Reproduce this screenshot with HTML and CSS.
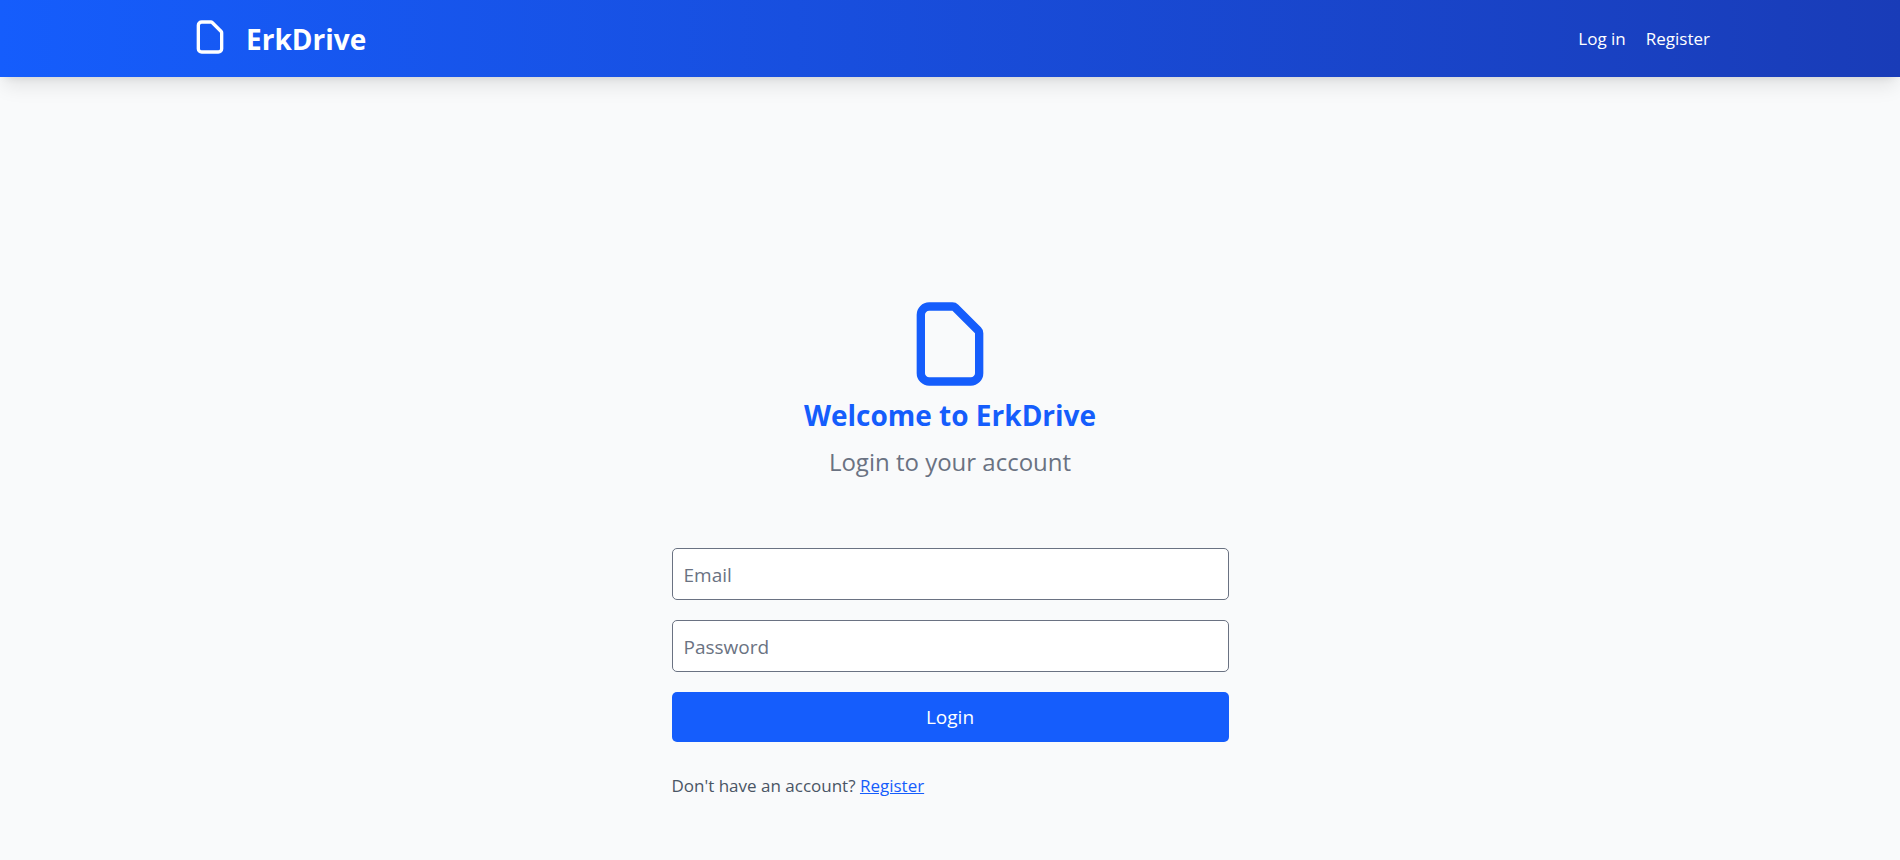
FILE: index.html
```html
<!DOCTYPE html>
<html lang="en">
<head>
<meta charset="utf-8">
<meta name="viewport" content="width=device-width, initial-scale=1">
<title>ErkDrive</title>
<link rel="stylesheet" href="styles.css">
</head>
<body>
<header class="header">
  <div class="container">
    <a class="brand" href="#">
      <svg class="brand-icon" viewBox="0 0 24 24" fill="none" stroke="currentColor" stroke-width="2" stroke-linecap="round" stroke-linejoin="round" aria-hidden="true"><path d="M7 21h10a2 2 0 002-2V9.414a1 1 0 00-.293-.707l-5.414-5.414A1 1 0 0012.586 3H7a2 2 0 00-2 2v14a2 2 0 002 2z"/></svg>
      <span class="brand-name">ErkDrive</span>
    </a>
    <nav class="nav">
      <a href="#">Log in</a>
      <a href="#">Register</a>
    </nav>
  </div>
</header>
<main class="main">
  <div class="intro">
    <svg class="intro-icon" viewBox="0 0 24 24" fill="none" stroke="currentColor" stroke-width="2" stroke-linecap="round" stroke-linejoin="round" aria-hidden="true"><path d="M7 21h10a2 2 0 002-2V9.414a1 1 0 00-.293-.707l-5.414-5.414A1 1 0 0012.586 3H7a2 2 0 00-2 2v14a2 2 0 002 2z"/></svg>
    <h1 class="title">Welcome to ErkDrive</h1>
    <p class="subtitle">Login to your account</p>
  </div>
  <form class="form">
    <input class="field" type="email" placeholder="Email" aria-label="Email">
    <input class="field" type="password" placeholder="Password" aria-label="Password">
    <button class="submit" type="button">Login</button>
  </form>
  <p class="signup">Don't have an account? <a href="#">Register</a></p>
</main>
</body>
</html>
```
FILE: styles.css
```css
*, *::before, *::after { box-sizing: border-box; }
body {
  margin: 0;
  min-height: 100vh;
  background: #f9fafb;
  color: #4a5565;
  font-family: "Segoe UI", "Open Sans", "Noto Sans", sans-serif;
  font-size: 17px;
  line-height: 28px;
}
h1, p { margin: 0; }
.header {
  background: linear-gradient(to right in oklab, #155dfc, #193cb8);
  color: #fff;
  box-shadow: 0 12px 19px -4px rgb(0 0 0 / 0.1), 0 5px 8px -5px rgb(0 0 0 / 0.1);
}
.container {
  max-width: 1536px;
  margin: 0 auto;
  padding: 17px 8px 16px;
  display: flex;
  align-items: center;
  justify-content: space-between;
}
.brand {
  display: flex;
  align-items: flex-start;
  gap: 16px;
  color: inherit;
  text-decoration: none;
}
.brand-icon { width: 40px; height: 40px; }
.brand-name { font-size: 28px; line-height: 44px; font-weight: 700; }
.nav { display: flex; gap: 20px; }
.nav a { color: inherit; text-decoration: none; }
.main {
  max-width: 557px;
  margin: 0 auto;
  padding: 217px 0 60px;
}
.intro {
  display: flex;
  flex-direction: column;
  align-items: center;
  margin-bottom: 66px;
}
.intro-icon { width: 100px; height: 100px; color: #155dfc; }
.title { color: #155dfc; font-size: 28px; line-height: 42px; font-weight: 700; }
.subtitle { color: #6a7282; font-size: 24px; line-height: 40px; margin-top: 6px; }
.form { display: flex; flex-direction: column; gap: 20px; }
.field {
  width: 100%;
  padding: 11px 11px 9px;
  border: 1px solid #6a7282;
  border-radius: 5px;
  background: #fff;
  color: #1e2939;
  font: inherit;
  font-size: 19px;
  line-height: 30px;
}
.field::placeholder { color: #6a7282; opacity: 1; }
.submit {
  padding: 10px;
  border: 0;
  border-radius: 5px;
  background: #155dfc;
  color: #fff;
  font: inherit;
  font-size: 19px;
  line-height: 30px;
}
.signup { margin-top: 30px; }
.signup a { color: #155dfc; text-decoration: underline; }
```
